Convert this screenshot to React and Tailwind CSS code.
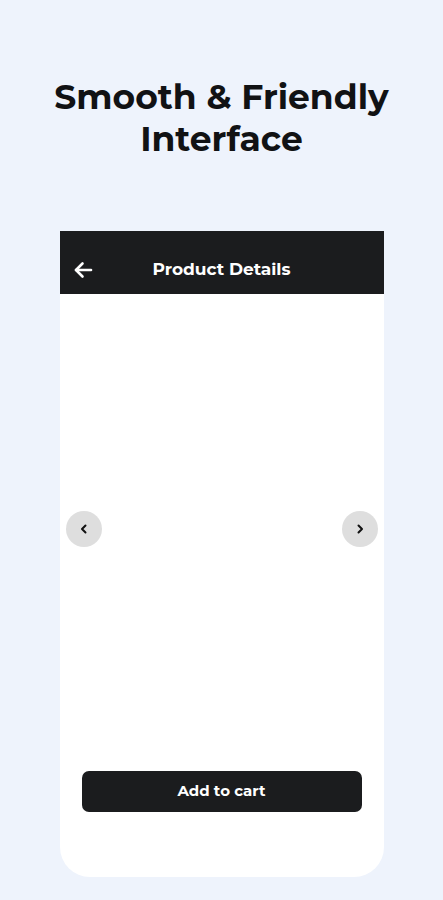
import React from 'react';

const font = { fontFamily: 'Montserrat, "Noto Sans", Inter, sans-serif' };

export default function App() {
  return (
    <div className="min-h-[900px] w-full bg-[#eef3fc] flex flex-col items-center" style={font}>
      {/* Heading */}
      <h1 className="mt-[76px] text-center text-[34.5px] leading-[42px] font-bold text-[#111214]">
        Smooth &amp; Friendly
        <br />
        Interface
      </h1>

      {/* Phone mock */}
      <div className="mt-[71px] w-[324px] h-[646px] bg-white rounded-b-[30px] flex flex-col overflow-hidden">
        <div className="h-[63px] bg-[#1b1c1e] pt-[28px] px-[13px]">
          <div className="relative h-[22px] flex items-center">
            <svg width="20" height="18" viewBox="0 0 20 18" fill="none" stroke="white" strokeWidth="2.6" strokeLinecap="round" strokeLinejoin="round">
              <path d="M18 9H3" />
              <path d="M9.5 2.5L3 9l6.5 6.5" />
            </svg>
            <span className="absolute inset-0 -mx-[13px] flex items-center justify-center text-white text-[17px] font-bold">
              Product Details
            </span>
          </div>
        </div>

        <div className="flex-1 flex flex-col">
          <div className="mt-[217px] flex items-center justify-between px-[6px]">
            <button className="w-[36px] h-[36px] rounded-full bg-[#dedede] flex items-center justify-center">
              <svg width="10" height="10" viewBox="0 0 10 10" fill="none" stroke="#111" strokeWidth="2" strokeLinecap="round" strokeLinejoin="round">
                <path d="M6.5 1.5L3 5l3.5 3.5" />
              </svg>
            </button>
            <button className="w-[36px] h-[36px] rounded-full bg-[#dedede] flex items-center justify-center">
              <svg width="10" height="10" viewBox="0 0 10 10" fill="none" stroke="#111" strokeWidth="2" strokeLinecap="round" strokeLinejoin="round">
                <path d="M3.5 1.5L7 5 3.5 8.5" />
              </svg>
            </button>
          </div>

          <div className="mt-[224px] px-[22px]">
            <button className="w-full h-[41px] rounded-[7px] bg-[#1b1c1e] text-white text-[15px] font-bold">
              Add to cart
            </button>
          </div>
        </div>
      </div>
    </div>
  );
}
